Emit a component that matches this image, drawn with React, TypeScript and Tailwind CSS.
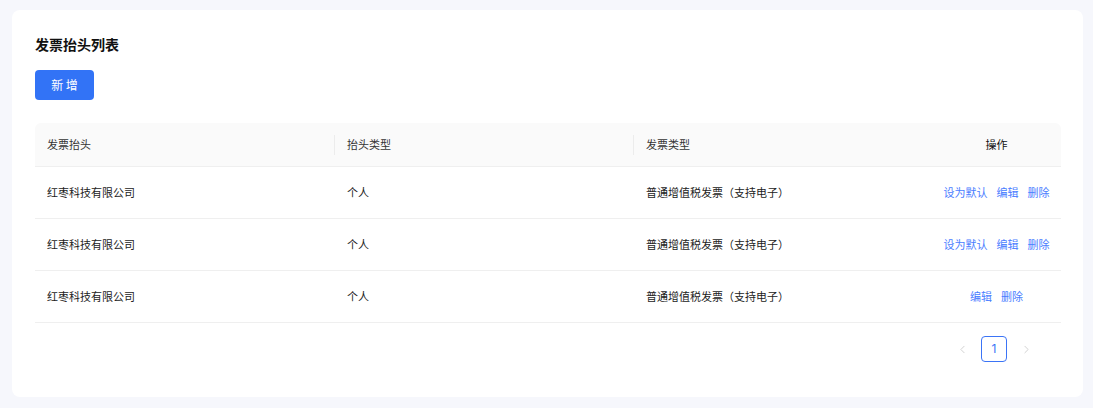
import { ChevronLeft, ChevronRight } from "lucide-react";

const rows = [
  { title: "红枣科技有限公司", kind: "个人", invoice: "普通增值税发票（支持电子）", isDefault: false },
  { title: "红枣科技有限公司", kind: "个人", invoice: "普通增值税发票（支持电子）", isDefault: false },
  { title: "红枣科技有限公司", kind: "个人", invoice: "普通增值税发票（支持电子）", isDefault: true },
];

const font = { fontFamily: '"Noto Sans CJK SC", "Noto Sans", sans-serif' };

export default function App() {
  return (
    <div className="min-h-[408px] bg-[#f6f7fc] pt-[10px] pb-[11px] pl-[12px] pr-[10px]" style={font}>
      <div className="bg-white rounded-[8px] pt-[24px] pb-[35px] pl-[23px] pr-[22px]">
        <h2 className="text-[14px] leading-[20px] font-bold text-[#111]">发票抬头列表</h2>

        <button className="mt-[16px] h-[30px] w-[59px] rounded-[4px] bg-[#3273f6] text-white text-[12px]">
          新 增
        </button>

        {/* table */}
        <div className="mt-[23px] text-[11px] text-[#222]">
          <div className="grid grid-cols-[299px_299px_299px_1fr] h-[44px] items-center bg-[#fafafa] rounded-t-[6px] border-b border-[#efefef] text-[#333]">
            <div className="pl-[12px]">发票抬头</div>
            <div className="flex items-center h-full">
              <span className="w-px h-[20px] bg-[#ececec]" />
              <span className="pl-[12px]">抬头类型</span>
            </div>
            <div className="flex items-center h-full">
              <span className="w-px h-[20px] bg-[#ececec]" />
              <span className="pl-[12px]">发票类型</span>
            </div>
            <div className="text-center text-[#111]">操作</div>
          </div>

          {rows.map((r, i) => (
            <div key={i} className="grid grid-cols-[299px_299px_299px_1fr] h-[52px] items-center border-b border-[#efefef]">
              <div className="pl-[12px]">{r.title}</div>
              <div className="pl-[13px]">{r.kind}</div>
              <div className="pl-[13px]">{r.invoice}</div>
              <div className="flex justify-center gap-[9px] text-[#4a7dff]">
                {!r.isDefault && <span>设为默认</span>}
                <span>编辑</span>
                <span>删除</span>
              </div>
            </div>
          ))}
        </div>

        {/* pagination */}
        <div className="mt-[13px] flex justify-end items-center gap-[6px] pr-[22px]">
          <span className="w-[26px] h-[26px] flex items-center justify-center text-[#c8c8c8]">
            <ChevronLeft size={13} strokeWidth={1.5} />
          </span>
          <span className="w-[26px] h-[26px] flex items-center justify-center rounded-[4px] border border-[#3b74f6] text-[#3b74f6] text-[12px] font-['Inter',sans-serif]">
            1
          </span>
          <span className="w-[26px] h-[26px] flex items-center justify-center text-[#c8c8c8]">
            <ChevronRight size={13} strokeWidth={1.5} />
          </span>
        </div>
      </div>
    </div>
  );
}
